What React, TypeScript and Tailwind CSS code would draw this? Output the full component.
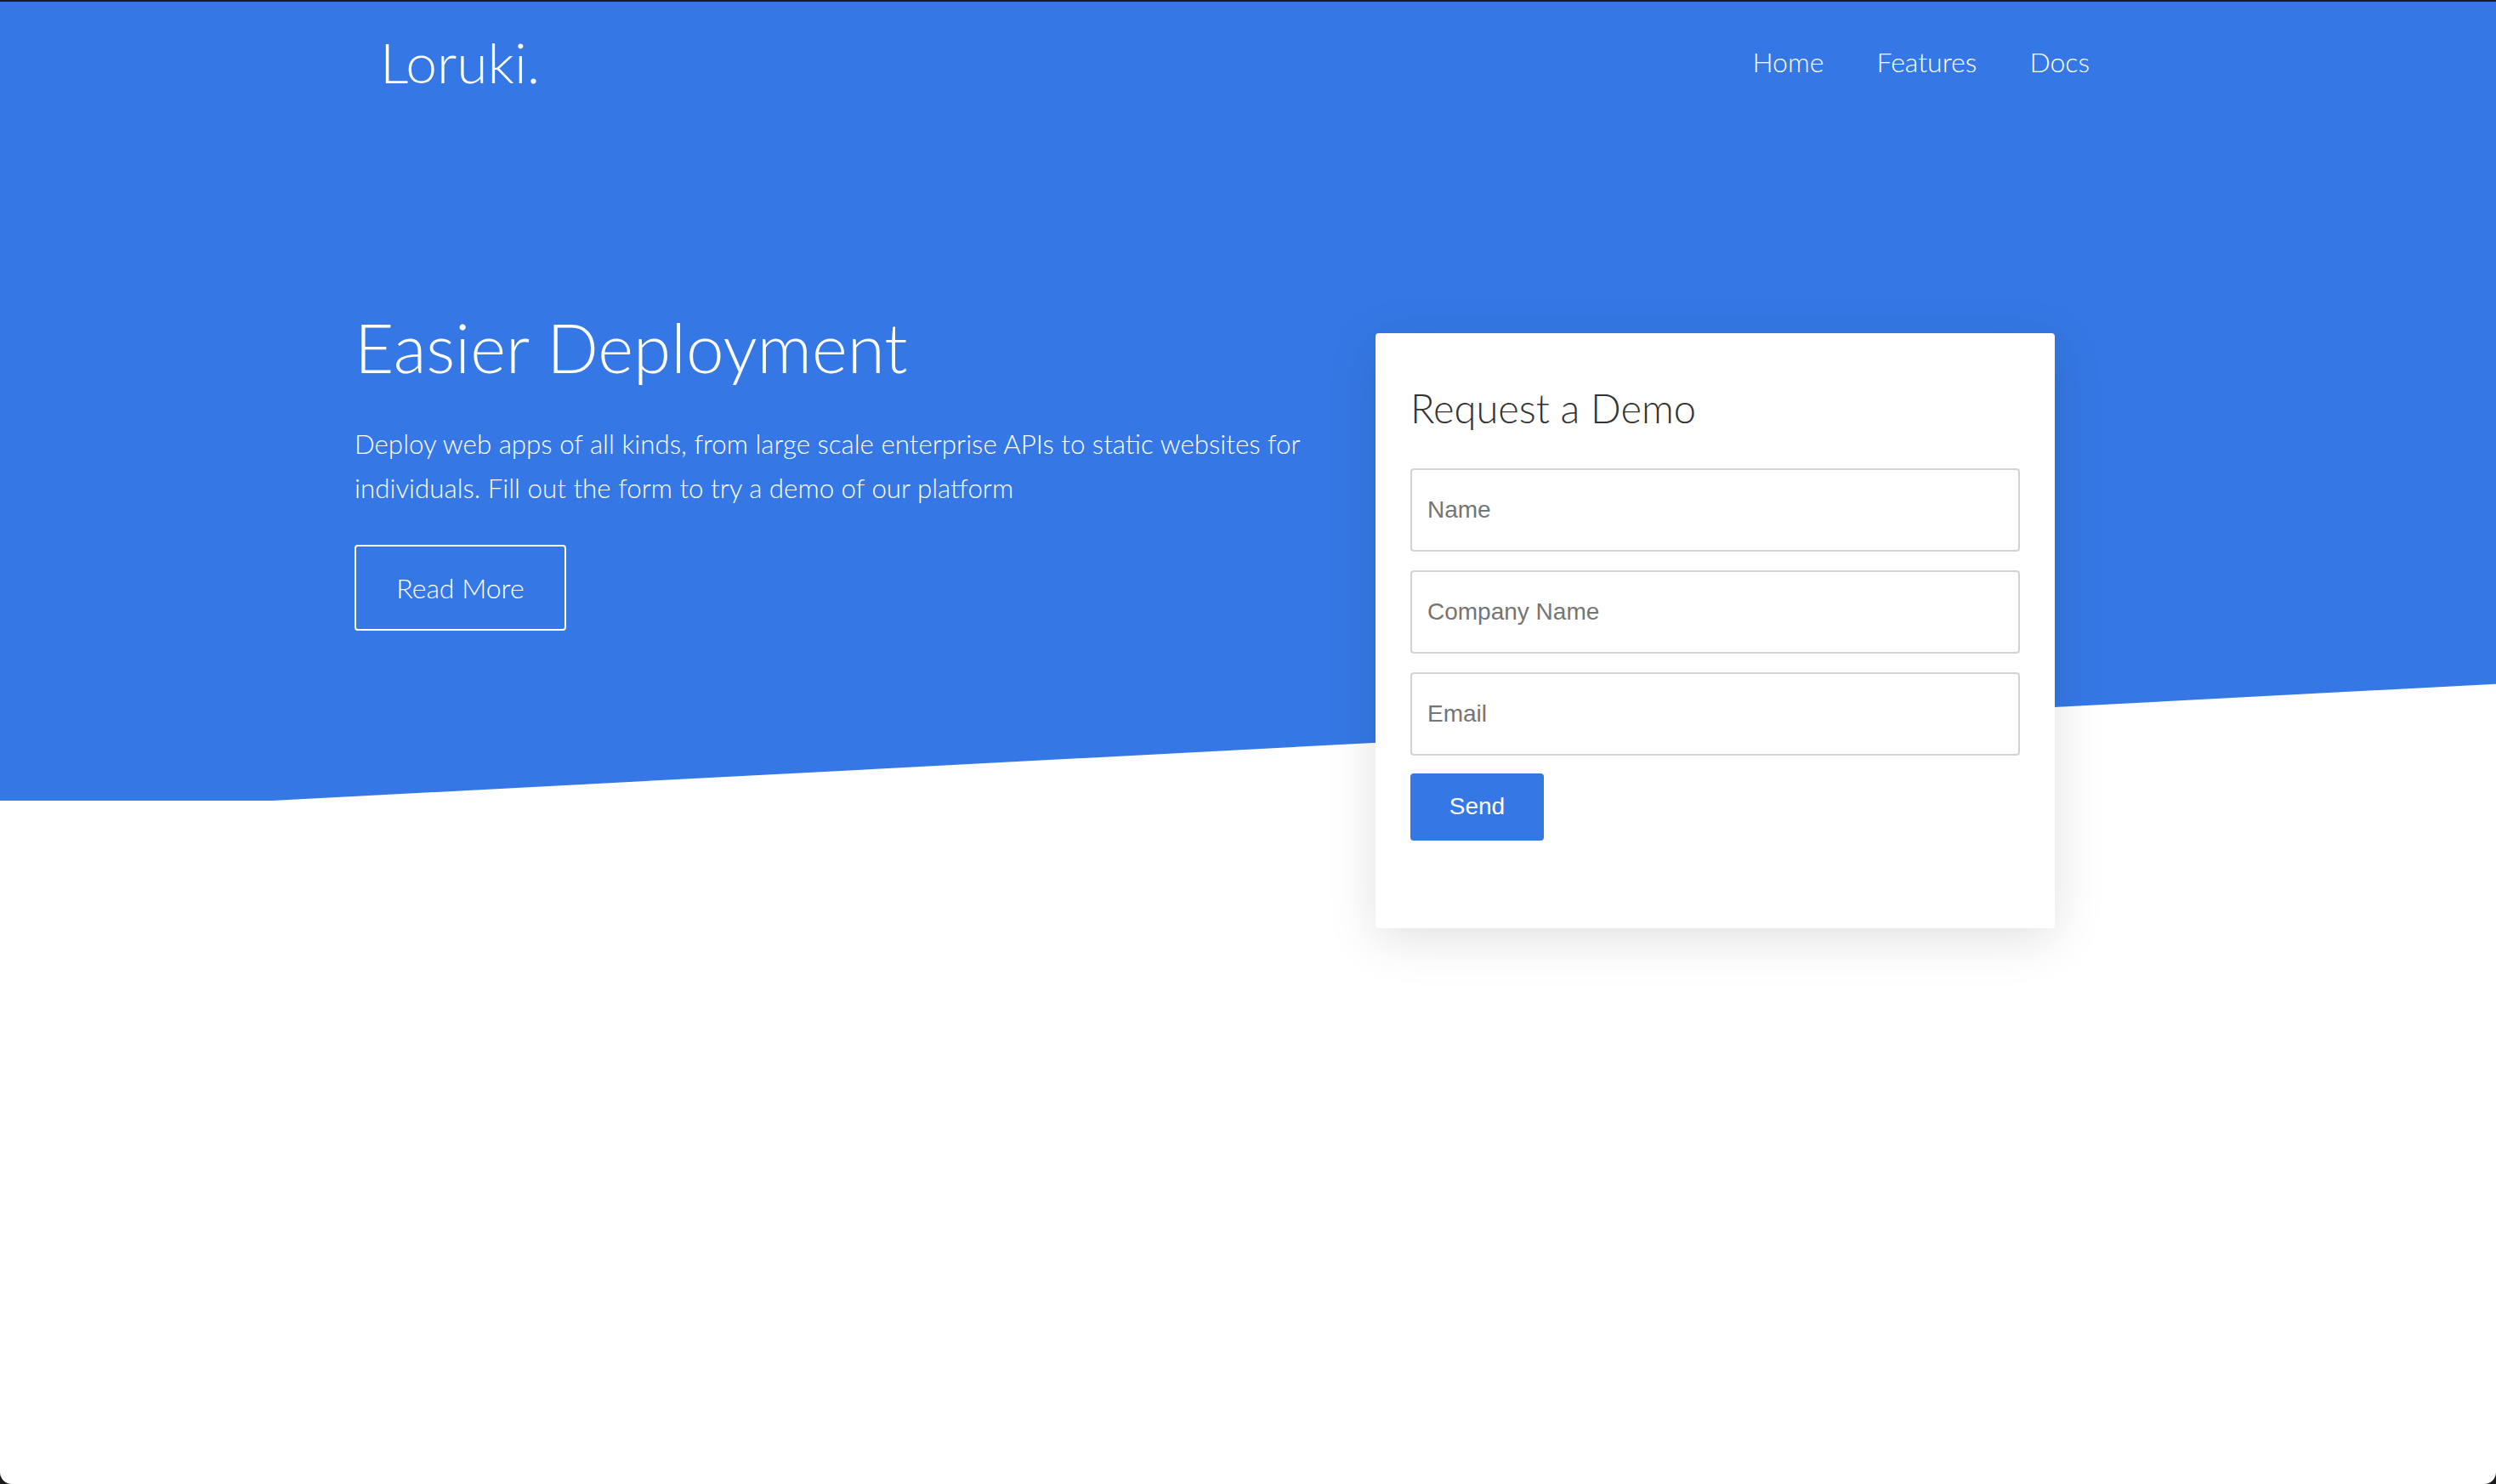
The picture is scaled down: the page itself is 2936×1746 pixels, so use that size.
import React from 'react';

const navLinks = ['Home', 'Features', 'Docs'];
const fields = ['Name', 'Company Name', 'Email'];

const DemoForm: React.FC = () => {
  return (
    <div className="mt-[32px] w-[799px] shrink-0 rounded-[4px] bg-white px-[41px] pb-[103px] pt-[60px] shadow-[0_12px_60px_rgba(0,0,0,0.12)]">
      <h2 className="text-[47px] font-light leading-[1.225] text-[#333]">Request a Demo</h2>
      <form className="mt-[41px] flex flex-col gap-[22px]" onSubmit={(e) => e.preventDefault()}>
        {fields.map((f) => (
          <input
            key={f}
            type="text"
            placeholder={f}
            className="h-[98px] w-full rounded-[4px] border-2 border-[#d3d3d3] px-[18px] font-['Liberation_Sans',Arial,sans-serif] text-[28px] text-[#333] outline-none placeholder:text-[#757575]"
          />
        ))}
        <button
          type="submit"
          className="-mt-[1px] h-[79px] w-[157px] self-start rounded-[4px] bg-[#3578e5] font-['Liberation_Sans',Arial,sans-serif] text-[28px] text-white"
        >
          Send
        </button>
      </form>
    </div>
  );
};

export default function App() {
  return (
    <div className="h-[1746px] w-full bg-[#1c1c1e] pt-[2px] font-['Lato',sans-serif]">
      <div className="relative h-full overflow-hidden rounded-b-[14px] bg-white">
        <section className="relative h-[940px]">
          {/* slanted blue backdrop */}
          <div className="absolute inset-0 bg-[#3578e5] [clip-path:polygon(0_0,100%_0,100%_85.4%,10.9%_100%,0_100%)]" />

          <div className="relative">
            <header className="flex h-[142px] items-center justify-between pl-[447px] pr-[478px] text-white">
              <a href="#" className="text-[66px] font-light leading-none">
                Loruki.
              </a>
              <nav className="flex gap-[62px] text-[32px] font-light">
                {navLinks.map((l) => (
                  <a key={l} href="#">
                    {l}
                  </a>
                ))}
              </nav>
            </header>

            <div className="flex items-start pl-[417px] pt-[216px]">
              <div className="w-[1201px] shrink-0 text-white">
                <h1 className="text-[80px] font-light leading-[1.2]">Easier Deployment</h1>
                <p className="mt-[40px] w-[1170px] text-[31.3px] font-light leading-[52px]">
                  Deploy web apps of all kinds, from large scale enterprise APIs to static websites for
                  individuals. Fill out the form to try a demo of our platform
                </p>
                <button className="mt-[41px] h-[101px] w-[249px] rounded-[4px] border-2 border-white text-[32px] font-light">
                  Read More
                </button>
              </div>
              <DemoForm />
            </div>
          </div>
        </section>
      </div>
    </div>
  );
}
